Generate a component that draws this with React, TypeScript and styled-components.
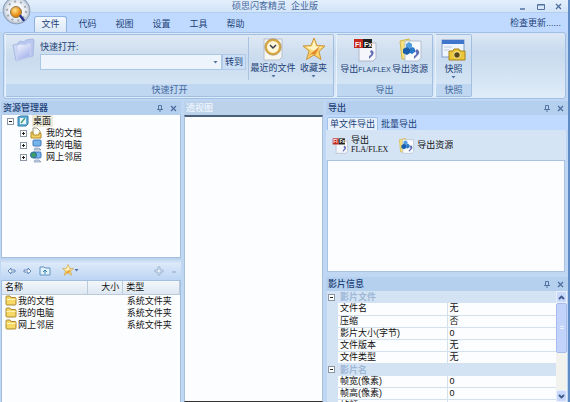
import React from "react";
import styled, { createGlobalStyle, css } from "styled-components";

const GlobalStyle = createGlobalStyle`
  *, *::before, *::after { box-sizing: border-box; }
  body { margin: 0; overflow: hidden; }
  body, button, input, table {
    font-family: "Liberation Sans", "Noto Sans CJK SC", sans-serif;
    font-size: 9px;
    line-height: 12px;
  }
  button { margin: 0; padding: 0; border: 0; background: none; color: inherit; white-space: nowrap; }
  svg { display: block; flex: none; }
`;

const navy = "#1c3f77";

const Frame = styled.div`
  height: 100vh;
  display: flex;
  flex-direction: column;
  color: ${navy};
  background: #bfd7f2;
  border-right: 2px solid #5f8cc4;
  position: relative;
  overflow: hidden;
`;

const TitleBar = styled.header`
  height: 13px;
  flex: none;
  display: grid;
  grid-template-columns: 1fr auto 1fr;
  padding: 0 6px 1px 0;
  background: linear-gradient(#e3effc, #d3e4f8);
  border-bottom: 1px solid #b3cfee;
`;

const Title = styled.h1`
  grid-column: 2;
  margin: 0;
  font-size: 9px;
  line-height: 12px;
  font-weight: 400;
  color: #45689c;
  white-space: pre;
  padding-right: 12px;
`;

const WindowButtons = styled.div`
  display: flex;
  justify-content: flex-end;
  align-items: center;
  gap: 10px;
  color: #52719f;
`;

const Orb = styled.button`
  position: absolute;
  left: 2px;
  top: -4px;
`;

const MenuBar = styled.nav`
  height: 19px;
  flex: none;
  display: flex;
  align-items: flex-end;
  gap: 4px;
  padding: 0 7px 0 34px;
  background: #bfdafe;
`;

const MenuTab = styled.button<{ $active?: boolean }>`
  width: 33px;
  height: 16px;
  border-radius: 3px 3px 0 0;
  padding-bottom: 1px;
  ${(p) =>
    p.$active &&
    css`
      background: linear-gradient(#f4f9ff, #dbe8f7);
      border: 1px solid #8fb2df;
      border-bottom: 0;
      padding-bottom: 2px;
    `}
`;

const UpdateLink = styled.a`
  margin-left: auto;
  color: inherit;
  text-decoration: none;
  align-self: center;
`;

const Ribbon = styled.section`
  height: 67px;
  flex: none;
  display: flex;
  gap: 2px;
  margin: 0 2px 2px 3px;
  padding: 1px;
  border: 1px solid #a0bfe4;
  border-radius: 3px;
  background: linear-gradient(#dce8f5, #c8daee 30%, #dfecf9);
`;

const Group = styled.section`
  display: flex;
  flex-direction: column;
  border: 1px solid #a3bfdf;
  border-left-color: #e8f2fc;
  border-radius: 2px;
  background: linear-gradient(#dfe9f5, #d0dfef 25%, #c9dbee 40%, #d9e9f8);
`;

const GroupBody = styled.div`
  flex: 1;
  display: flex;
  padding: 2px 3px 0;
`;

const GroupName = styled.h2`
  margin: 0;
  height: 12px;
  font-size: 9px;
  font-weight: 400;
  text-align: center;
  color: #44699f;
  background: #bfd7f0;
`;

const QuickOpen = styled.div`
  display: grid;
  grid-template-columns: 28px 182px 24px;
  grid-template-rows: 17px 16px;
  padding-left: 3px;
  padding-right: 2px;
  margin-bottom: 4px;
  border-right: 1px solid #a9c2df;

  > svg { grid-row: 1 / 3; }
`;

const QuickLabel = styled.label`
  grid-column: 2 / 4;
  padding-top: 4px;
`;

const Combo = styled.div`
  display: flex;
  background: #edf4fc;
  border: 1px solid #abc7e8;
`;

const ComboInput = styled.input`
  flex: 1;
  min-width: 0;
  border: 0;
  padding: 0 3px;
  background: transparent;
`;

const ComboArrow = styled.button`
  width: 11px;
  display: grid;
  place-items: center;
`;

const GoButton = styled.button`
  background: #cadef5;
  border: 1px solid #b3cae6;
`;

const BigButton = styled.button<{ $width: number }>`
  width: ${(p) => p.$width}px;
  display: flex;
  flex-direction: column;
  align-items: center;
  line-height: 12px;
  gap: 1px;
`;

const Latin = styled.span`
  font-family: "Liberation Sans", sans-serif;
  font-size: 7px;
`;

const Workspace = styled.main`
  flex: 1;
  min-height: 0;
  display: grid;
  grid-template-columns: minmax(0, 180fr) minmax(0, 139fr) minmax(0, 242fr);
  gap: 3px;
  padding-left: 1px;
`;

const Column = styled.div`
  display: flex;
  flex-direction: column;
  min-height: 0;
  min-width: 0;
`;

const PanelHeader = styled.header<{ $pale?: boolean }>`
  height: 14px;
  flex: none;
  display: flex;
  align-items: center;
  gap: 7px;
  padding: 0 4px 0 2px;
  color: ${(p) => (p.$pale ? "#eef5fd" : navy)};
  background: ${(p) => (p.$pale ? "#bcd2ea" : "#b5cfee")};

  > :first-child { margin-right: auto; }
`;

const PanelName = styled.h2`
  margin: 0;
  font-size: 9px;
  line-height: 12px;
  font-weight: 500;
`;

const Tree = styled.ul`
  list-style: none;
  margin: 0;
  padding: 0 0 0 5px;
  height: 143px;
  flex: none;
  color: #111;
  background: #fcfdfe;
  border: 1px solid #a3bfe0;
  border-top: 0;
`;

const TreeRow = styled.li<{ $level: number }>`
  height: 12px;
  display: flex;
  align-items: center;
  gap: 3px;
  padding-left: ${(p) => p.$level * 13}px;
`;

const TreeName = styled.span<{ $selected?: boolean }>`
  padding: 0 2px 0 1px;
  background: ${(p) => (p.$selected ? "#ece9d8" : "none")};
`;

const FileTools = styled.div`
  height: 22px;
  flex: none;
  display: flex;
  align-items: flex-end;
  gap: 7px;
  padding: 0 4px 4px 6px;
  background: linear-gradient(#b9d0ec, #dce9f9 25%, #bcd5f3);
`;

const FavButton = styled.button`
  display: flex;
  align-items: center;
  margin-left: 4px;
  margin-right: auto;
`;

const FileArea = styled.div`
  flex: 1;
  background: #fcfdfe;
  border: 1px solid #a3bfe0;
  border-bottom: 0;
`;

const FileTable = styled.table`
  width: 100%;
  table-layout: fixed;
  border-collapse: collapse;
  color: #111;

  th {
    height: 13px;
    padding: 0 3px;
    font-weight: 400;
    text-align: left;
    background: linear-gradient(#f3f7fb, #dde7f1);
    border-right: 1px solid #bccbdc;
    border-bottom: 1px solid #bccbdc;
  }
  th:nth-child(2) { text-align: right; }
  td { height: 12px; padding: 0 0 0 4px; white-space: nowrap; }
  td:first-child { padding-left: 3px; }
`;

const FileName = styled.span`
  display: flex;
  align-items: center;
  gap: 1px;
`;

const Canvas = styled.div`
  flex: 1;
  background: #fcfdfe;
  border: 1px solid #a8c0dc;
  border-top: 2px solid #4a5f7c;
  border-bottom: 1px solid #333;
`;

const ExportTabs = styled.div`
  height: 15px;
  flex: none;
  display: flex;
  align-items: flex-end;
  padding-left: 1px;
  background: #bfdafe;
`;

const ExportTab = styled.button<{ $active?: boolean }>`
  height: 13px;
  padding: 0 2px;
  border-radius: 2px 2px 0 0;
  background: ${(p) => (p.$active ? "#e7f1fc" : "none")};
  border: 1px solid ${(p) => (p.$active ? "#9fc0e8" : "transparent")};
  border-bottom: 0;
`;

const ExportTools = styled.div`
  height: 30px;
  flex: none;
  display: flex;
  align-items: center;
  gap: 10px;
  padding-left: 6px;
  margin-right: 2px;
  background: #d5e4f4;
  color: #111;
`;

const ToolButton = styled.button`
  display: flex;
  align-items: center;
  gap: 2px;
  text-align: left;
  line-height: 9px;
`;

const SerifLabel = styled.span`
  font-family: "Liberation Serif", serif;
  font-size: 8px;
`;

const ExportList = styled.div`
  height: 112px;
  flex: none;
  margin: 0 3px 5px 1px;
  background: #fcfdfe;
  border: 1px solid #a9c3e2;
`;

const InfoBody = styled.div`
  flex: 1;
  min-height: 0;
  display: flex;
  margin: 0 1px;
  overflow: hidden;
`;

const InfoScroll = styled.div`
  flex: 1;
  min-width: 0;
`;

const InfoTable = styled.table`
  width: 100%;
  table-layout: fixed;
  border-collapse: collapse;
  color: #111;

  td, th { height: 12px; padding: 0 0 0 2px; font-weight: 400; text-align: left; white-space: nowrap; }
  tr > :first-child { background: #d3e3f4; padding: 0 0 0 1px; }
`;

const PropertyRow = styled.tr`
  background: #fcfdfe;
  th, td:last-child { border-bottom: 1px solid #d3e0ed; line-height: 11px; }
  td:last-child { border-left: 1px solid #d3e0ed; }
`;

const CategoryRow = styled.tr`
  background: #d3e3f4;
  th { color: #9db7d6; font-weight: 700; }
`;

const ScrollBar = styled.div`
  width: 11px;
  flex: none;
  display: flex;
  flex-direction: column;
  background: #f2f3ee;
`;

const ScrollButton = styled.button`
  height: 12px;
  display: grid;
  place-items: center;
  background: #c8d8fa;
  border: 1px solid #e9effc;
  border-radius: 2px;
`;

const Thumb = styled.div`
  height: 50px;
  margin-bottom: auto;
  display: grid;
  place-items: center;
  background: #c2d3fb;
  border: 1px solid #a6bcec;
  border-radius: 2px;
`;

const OrbIcon = () => (
  <svg width="29" height="29" viewBox="0 0 29 29">
    <defs>
      <radialGradient id="orb">
        <stop offset="0.3" stopColor="#fff" />
        <stop offset="0.8" stopColor="#dce2ea" />
        <stop offset="1" stopColor="#a3b1c5" />
      </radialGradient>
      <radialGradient id="sun" cx="0.4" cy="0.35">
        <stop offset="0" stopColor="#ffe58a" />
        <stop offset="1" stopColor="#e48a12" />
      </radialGradient>
    </defs>
    <circle cx="14.5" cy="14.5" r="13.5" fill="url(#orb)" stroke="#8fa2bc" />
    <circle cx="14.5" cy="15" r="9.5" fill="none" stroke="#a3a9b2" strokeWidth="2" strokeDasharray="2 4" />
    <circle cx="14" cy="16" r="5.5" fill="url(#sun)" stroke="#8c7650" />
    <path d="M18.5 20l3 4" stroke="#26358f" strokeWidth="2.5" strokeLinecap="round" />
  </svg>
);

const FolderStack = () => (
  <svg width="24" height="26" viewBox="0 0 24 26">
    <defs>
      <linearGradient id="fold" x2="0.5" y2="1">
        <stop offset="0" stopColor="#f6f8ff" />
        <stop offset="1" stopColor="#a3b3ea" />
      </linearGradient>
    </defs>
    <path d="M1 8l5-1v12l1 4-3 1z" fill="#cdd8f5" stroke="#a9b9e2" />
    <path d="M6 6l2-2 4 1 2-2 7-1 1 1-1 16-15 4z" fill="#b9c7f0" stroke="#a9b9e2" />
    <path d="M5 9q0-1 1-1l4-1 2 1 6-2q1 0 1 1l-1 12q0 1-1 1L5 24z" fill="url(#fold)" stroke="#c5d0f0" />
  </svg>
);

const Caret = () => (
  <svg width="5" height="3" viewBox="0 0 5 3"><path d="M0.5 0h4L2.5 2.5z" fill="#52719f" /></svg>
);

const ClockIcon = () => (
  <svg width="24" height="24" viewBox="0 0 24 24">
    <path d="M3 2h18v18l-3 3H3z" fill="#f6f6f3" stroke="#b9bfc8" />
    <circle cx="12" cy="10" r="7" fill="#fff7dc" stroke="#d9a83e" strokeWidth="2" />
    <circle cx="12" cy="10" r="8.2" fill="none" stroke="#9b7a3a" strokeWidth="0.6" />
    <path d="M9 8l3 3 3-3" fill="none" stroke="#3b3b4a" strokeWidth="1.5" />
  </svg>
);

const StarIcon = ({ size = 24 }: { size?: number }) => (
  <svg width={size} height={size} viewBox="0 0 24 24">
    <path d="M12 1l3 7.5 8 .5-6 5.5 2 8L12 18l-7.5 4.5L7 14 1 9l8-.5z" fill="#fbd46c" stroke="#c9953a" />
    <path d="M12 3l2 6.5 6 .5-8 4-8-4 6-.5z" fill="#fff4c4" />
    <path d="M6 19l12-10-5 9-3-1z" fill="#e08a2c" />
  </svg>
);

const FlaIcon = ({ size = 25 }: { size?: number }) => (
  <svg width={size} height={size} viewBox="0 0 25 25">
    <path d="M6 6h17v15l-3 3H6z" fill="#f5f6fb" stroke="#afb8ca" />
    <rect x="1" y="2" width="9" height="9" fill="#c52a1d" />
    <rect x="10" y="2" width="9" height="9" fill="#222" />
    <text x="2" y="9.5" fontSize="7" fontWeight="700" fill="#fff">Fl</text>
    <text x="11" y="9.5" fontSize="7" fontWeight="700" fill="#fff">Fx</text>
    <path d="M18 13q4 1 2 5l-4 4 0-3q4-2 1-4z" fill="#6470b7" />
  </svg>
);

const ResourceIcon = ({ size = 25 }: { size?: number }) => (
  <svg width={size} height={size} viewBox="0 0 25 25">
    <path d="M2 4l9-2 2 3v17H4z" fill="#f4e07f" stroke="#d2b848" />
    <path d="M7 4h16v17l-3 3H7z" fill="#f8fafe" stroke="#b3bfd2" />
    <path d="M8 7l3-2 3 2v3l-3 2-3-2z" fill="#4f9cdf" />
    <path d="M5 12l4-2 3 2v4l-3 2-4-2z" fill="#1b5eae" />
    <path d="M12 11l3-1 2 2v3l-3 2-2-1z" fill="#2b79c9" />
    <path d="M19 12q4 3 1 6l-4 4v-3q4-2 1-5z" fill="#6470b7" />
  </svg>
);

const SnapshotIcon = () => (
  <svg width="25" height="25" viewBox="0 0 25 25">
    <rect x="1" y="3" width="22" height="17" fill="#eff5fd" stroke="#819cc8" />
    <rect x="1" y="3" width="22" height="4" fill="#4076cc" />
    <path d="M3 10h8M3 13h5" stroke="#bccbe0" />
    <path d="M8 14h4l1-2h5l1 2h5v9H8z" fill="#ebc737" stroke="#a5821c" />
    <circle cx="16" cy="18" r="3.3" fill="#574719" stroke="#fff0a0" />
  </svg>
);

const PinIcon = () => (
  <svg width="6" height="7" viewBox="0 0 6 7"><path d="M1.5 4V.5h3V4M0 4.500h6M3 4.500V7" fill="none" stroke="#55749f" /></svg>
);

const CloseIcon = () => (
  <svg width="7" height="7" viewBox="0 0 7 7"><path d="M1 1l5 5M6 1L1 6" stroke="#4b6b9b" strokeWidth="1.2" /></svg>
);

const Toggle = ({ open }: { open?: boolean }) => (
  <svg width="7" height="7" viewBox="0 0 7 7">
    <rect x="0.5" y="0.5" width="6" height="6" fill="#fff" stroke="#8b96a4" />
    <path d={open ? "M2 3.5h3" : "M2 3.5h3M3.5 2v3"} stroke="#222" />
  </svg>
);

const TreeIcon = ({ kind }: { kind: string }) => (
  <svg width="12" height="12" viewBox="0 0 12 12">
    {kind === "desktop" && (
      <>
        <path d="M1 2l3-1h7v8l-2 2H1z" fill="#63b3d8" stroke="#3179a7" />
        <path d="M3 3h6v6H3z" fill="#eaf7fd" />
        <path d="M4 8l4-5" stroke="#49a080" strokeWidth="1.5" />
      </>
    )}
    {kind === "docs" && (
      <>
        <path d="M3 1h4l3 3v5H3z" fill="#fdfdf5" stroke="#9a9a80" />
        <path d="M1 5h2v3h6V6h2v5H1z" fill="#f3d164" stroke="#b38f2b" />
      </>
    )}
    {(kind === "computer" || kind === "network") && (
      <>
        <rect x="3" y="1" width="8" height="6" rx="1" fill="#74b4ec" stroke="#4679b9" />
        <path d="M5 9h4l2 2H4z" fill="#c9d6e6" stroke="#7e94b1" strokeWidth="0.7" />
        {kind === "network" && <circle cx="3.5" cy="4" r="3" fill="#3f9e68" stroke="#2b6dab" />}
      </>
    )}
  </svg>
);

const FolderIcon = () => (
  <svg width="12" height="11" viewBox="0 0 12 11">
    <path d="M1 9V2q0-1 1-1h3l1 1.5h4q1 0 1 1V9q0 1-1 1H2q-1 0-1-1z" fill="#f6d867" stroke="#ad882c" />
    <path d="M1.5 4.5h9" stroke="#fdf2b4" />
  </svg>
);

const ArrowIcon = ({ forward }: { forward?: boolean }) => (
  <svg width="9" height="10" viewBox="0 0 9 10">
    <path d={forward ? "M8 5L5 2v2H1v2h4v2z" : "M1 5l3-3v2h4v2H4v2z"} fill="#f3f8ff" stroke="#6386b8" />
  </svg>
);

const UpFolderIcon = () => (
  <svg width="12" height="10" viewBox="0 0 12 10">
    <path d="M1 9V1h4l1 1h5v7z" fill="#e4f2fc" stroke="#5e91c0" />
    <path d="M6 8V4M4 6l2-2 2 2" fill="none" stroke="#3484ae" />
  </svg>
);

const PlusIcon = () => (
  <svg width="10" height="10" viewBox="0 0 10 10">
    <path d="M4 1h2v3h3v2H6v3H4V6H1V4h3z" fill="#e5effa" stroke="#9cb3cf" />
  </svg>
);

const Chevron = ({ down }: { down?: boolean }) => (
  <svg width="7" height="5" viewBox="0 0 7 5">
    <path d={down ? "M1 1l2.5 2.5L6 1" : "M1 4l2.5-2.5L6 4"} fill="none" stroke="#40598b" strokeWidth="1.8" />
  </svg>
);

const menus = ["文件", "代码", "视图", "设置", "工具", "帮助"];

const tree = [
  { name: "桌面", kind: "desktop", level: 0 },
  { name: "我的文档", kind: "docs", level: 1 },
  { name: "我的电脑", kind: "computer", level: 1 },
  { name: "网上邻居", kind: "network", level: 1 },
];

const properties: [string, string?][] = [
  ["影片文件"],
  ["文件名", "无"],
  ["压缩", "否"],
  ["影片大小(字节)", "0"],
  ["文件版本", "无"],
  ["文件类型", "无"],
  ["影片名"],
  ["帧宽(像素)", "0"],
  ["帧高(像素)", "0"],
  ["帧频", "0"],
];

const Header = ({ name }: { name: string }) => (
  <PanelHeader>
    <PanelName>{name}</PanelName>
    <button aria-label="固定"><PinIcon /></button>
    <button aria-label="关闭"><CloseIcon /></button>
  </PanelHeader>
);

export default function App() {
  return (
    <Frame>
      <GlobalStyle />
      <TitleBar>
        <Title>硕思闪客精灵  企业版</Title>
        <WindowButtons>
          <button aria-label="最小化">
            <svg width="8" height="7" viewBox="0 0 8 7"><path d="M1 6h5" stroke="currentColor" strokeWidth="1.5" /></svg>
          </button>
          <button aria-label="最大化">
            <svg width="8" height="7" viewBox="0 0 8 7"><path d="M.5 1.5h7v5h-7zM.5 2h7" fill="none" stroke="currentColor" /></svg>
          </button>
          <button aria-label="关闭窗口"><CloseIcon /></button>
        </WindowButtons>
      </TitleBar>
      <MenuBar>
        {menus.map((m, i) => (
          <MenuTab key={m} $active={i === 0}>{m}</MenuTab>
        ))}
        <UpdateLink href="#update">检查更新......</UpdateLink>
      </MenuBar>
      <Orb aria-label="主菜单"><OrbIcon /></Orb>

      <Ribbon>
        <Group>
          <GroupBody>
            <QuickOpen>
              <FolderStack />
              <QuickLabel htmlFor="quick">快速打开:</QuickLabel>
              <Combo>
                <ComboInput id="quick" />
                <ComboArrow aria-label="展开"><Caret /></ComboArrow>
              </Combo>
              <GoButton>转到</GoButton>
            </QuickOpen>
            <BigButton $width={48}><ClockIcon />最近的文件<Caret /></BigButton>
            <BigButton $width={33}><StarIcon />收藏夹<Caret /></BigButton>
          </GroupBody>
          <GroupName>快速打开</GroupName>
        </Group>
        <Group>
          <GroupBody>
            <BigButton $width={51}><FlaIcon /><span>导出<Latin>FLA/FLEX</Latin></span></BigButton>
            <BigButton $width={38}><ResourceIcon />导出资源</BigButton>
          </GroupBody>
          <GroupName>导出</GroupName>
        </Group>
        <Group>
          <GroupBody>
            <BigButton $width={29}><SnapshotIcon />快照<Caret /></BigButton>
          </GroupBody>
          <GroupName>快照</GroupName>
        </Group>
      </Ribbon>

      <Workspace>
        <Column>
          <Header name="资源管理器" />
          <Tree>
            {tree.map((t) => (
              <TreeRow key={t.name} $level={t.level}>
                <Toggle open={t.level === 0} />
                <TreeIcon kind={t.kind} />
                <TreeName $selected={t.level === 0}>{t.name}</TreeName>
              </TreeRow>
            ))}
          </Tree>
          <FileTools>
            <button aria-label="后退"><ArrowIcon /></button>
            <button aria-label="前进"><ArrowIcon forward /></button>
            <button aria-label="向上"><UpFolderIcon /></button>
            <FavButton aria-label="收藏"><StarIcon size={12} /><Caret /></FavButton>
            <button aria-label="添加"><PlusIcon /></button>
            <button aria-label="移除">
              <svg width="6" height="10" viewBox="0 0 6 10"><path d="M1 6h4" stroke="#8ba5c6" /></svg>
            </button>
          </FileTools>
          <FileArea>
            <FileTable>
              <colgroup><col width="48%" /><col width="20%" /><col width="32%" /></colgroup>
              <thead><tr><th>名称</th><th>大小</th><th>类型</th></tr></thead>
              <tbody>
                {tree.slice(1).map((f) => (
                  <tr key={f.name}>
                    <td><FileName><FolderIcon />{f.name}</FileName></td>
                    <td />
                    <td>系统文件夹</td>
                  </tr>
                ))}
              </tbody>
            </FileTable>
          </FileArea>
        </Column>

        <Column>
          <PanelHeader $pale><PanelName>透视图</PanelName></PanelHeader>
          <Canvas />
        </Column>

        <Column>
          <Header name="导出" />
          <ExportTabs>
            <ExportTab $active>单文件导出</ExportTab>
            <ExportTab>批量导出</ExportTab>
          </ExportTabs>
          <ExportTools>
            <ToolButton><FlaIcon size={17} /><span>导出<br /><SerifLabel>FLA/FLEX</SerifLabel></span></ToolButton>
            <ToolButton><ResourceIcon size={17} />导出资源</ToolButton>
          </ExportTools>
          <ExportList />
          <Header name="影片信息" />
          <InfoBody>
            <InfoScroll>
              <InfoTable>
                <colgroup><col width="11" /><col /><col /></colgroup>
                <tbody>
                  {properties.map(([name, value]) =>
                    value === undefined ? (
                      <CategoryRow key={name}><td><Toggle open /></td><th colSpan={2}>{name}</th></CategoryRow>
                    ) : (
                      <PropertyRow key={name}><td /><th>{name}</th><td>{value}</td></PropertyRow>
                    )
                  )}
                </tbody>
              </InfoTable>
            </InfoScroll>
            <ScrollBar>
              <ScrollButton aria-label="向上滚动"><Chevron /></ScrollButton>
              <Thumb><svg width="4" height="4" viewBox="0 0 4 4"><path d="M0 .5h4M0 2.5h4" stroke="#e9f0ff" /></svg></Thumb>
              <ScrollButton aria-label="向下滚动"><Chevron down /></ScrollButton>
            </ScrollBar>
          </InfoBody>
        </Column>
      </Workspace>
    </Frame>
  );
}
